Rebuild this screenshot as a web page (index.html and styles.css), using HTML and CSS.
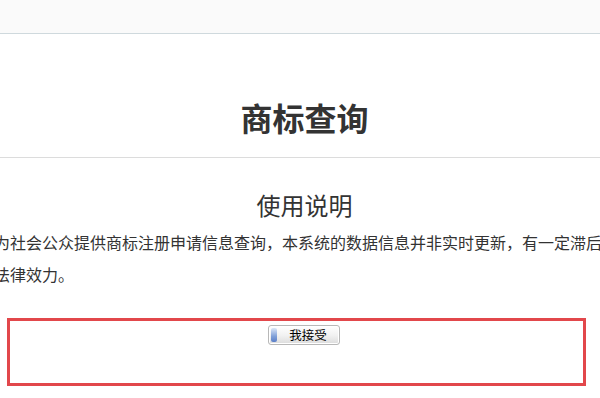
FILE: index.html
```html
<!DOCTYPE html>
<html lang="zh-CN">
<head>
  <meta charset="UTF-8">
  <meta name="viewport" content="width=device-width, initial-scale=1.0">
  <title>商标查询</title>
  <link rel="stylesheet" href="styles.css">
</head>
<body>
  <!-- Top bar -->
  <div class="top-bar"></div>

  <div class="page">
    <h1 class="page-title">商标查询</h1>
    <hr class="divider">

    <!-- Usage notes -->
    <h2 class="notice-title">使用说明</h2>
    <p class="notice-text">为社会公众提供商标注册申请信息查询，本系统的数据信息并非实时更新，有一定滞后性，仅供参考，不具有<br>法律效力。</p>

    <div class="accept-box">
      <button class="accept-btn"><span class="accept-btn-cap"></span>我接受</button>
    </div>
  </div>
</body>
</html>
```

FILE: styles.css
```css
body {
  margin: 0;
  overflow: hidden;
  background: #fff;
  color: #333;
  font-family: "Noto Sans CJK SC", "Liberation Sans", sans-serif;
}

.top-bar {
  height: 33px;
  background-color: #fafafa;
  border-bottom: 1px solid #cfd9dd;
}

.page-title {
  margin: 66px 0 0;
  padding-left: 9px;
  font-size: 32px;
  line-height: 34px;
  font-weight: bold;
  text-align: center;
  color: #333;
}

.divider {
  margin: 23px 0 0;
  border: 0;
  border-top: 1px solid #dcdcdc;
}

.notice-title {
  margin: 32px 0 0;
  padding-left: 9px;
  font-size: 24px;
  line-height: 30px;
  font-weight: normal;
  text-align: center;
  color: #333;
}

.notice-text {
  margin: 6px 0 0 -6px;
  font-size: 16px;
  line-height: 32px;
  white-space: nowrap;
  color: #333;
}

.accept-box {
  margin: 28px 0 0 7px;
  width: 558px;
  height: 58px;
  border: 3px solid #e2474b;
  padding: 4px 0 0 15px;
  text-align: center;
}

.accept-btn {
  position: relative;
  display: inline-block;
  width: 72px;
  height: 20px;
  padding: 0 0 0 8px;
  border: 1px solid #b8b8b8;
  border-radius: 3px;
  background: linear-gradient(#ffffff, #f2f2f2 50%, #dcdcdc);
  box-shadow: inset 0 0 0 1px #fff;
  font-family: "Noto Sans CJK SC", sans-serif;
  font-size: 12.5px;
  line-height: 18px;
  color: #000;
  vertical-align: top;
}

.accept-btn-cap {
  position: absolute;
  left: 2px;
  top: 2px;
  bottom: 2px;
  width: 6px;
  border-radius: 2px;
  background: linear-gradient(#dbe6f7, #7f9fd8 60%, #5b7fc8);
}
```
